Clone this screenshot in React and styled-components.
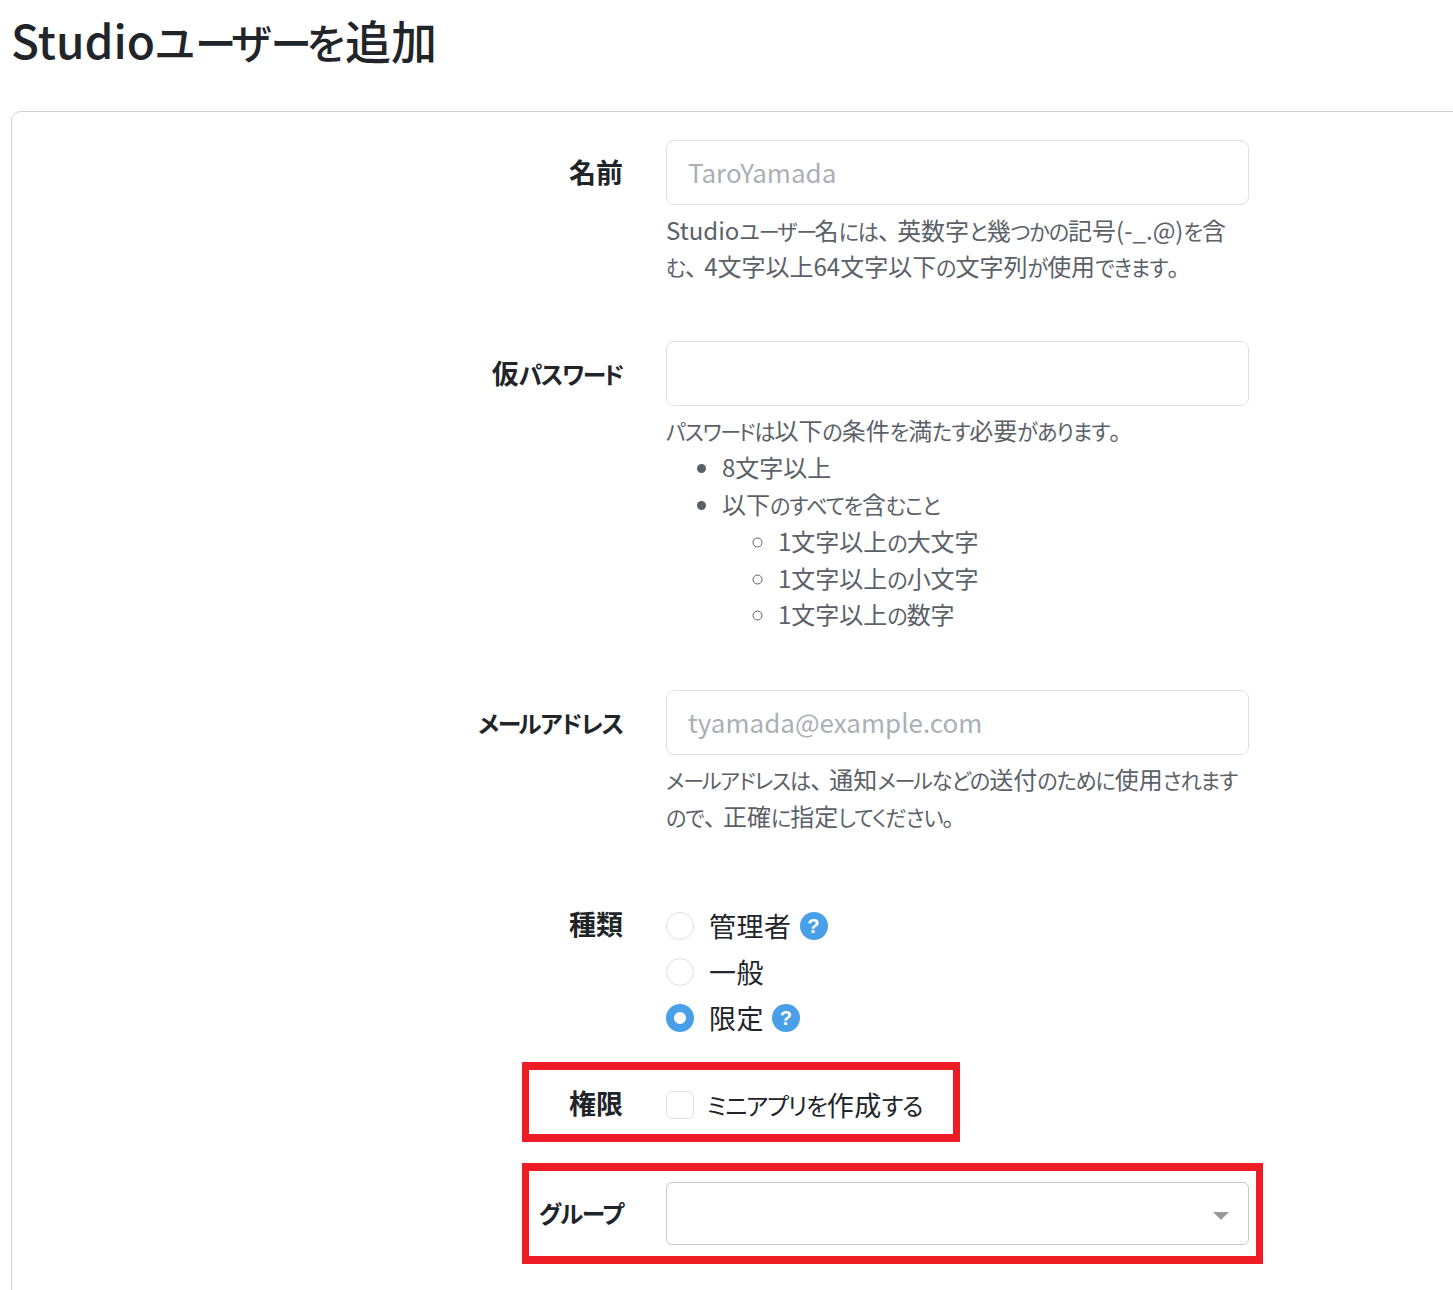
import React from "react";
import styled, { createGlobalStyle } from "styled-components";

const Global = createGlobalStyle`
  html, body { margin: 0; padding: 0; background: #fff; overflow: hidden; }
  body { font-family: "Noto Sans CJK JP", "Open Sans", sans-serif; color: #212529; font-feature-settings: "palt"; }
`;
const KanaRun = styled.span`
  font-size: 0.88em; line-height: 1; letter-spacing: -0.05em;
`;
const BarRun = styled(KanaRun)`
  letter-spacing: -0.12em;
`;
const Punct = styled.span`
  font-feature-settings: normal; line-height: 1; letter-spacing: -0.3em; margin-right: 0.1em;
`;
const Page = styled.div`
  width: 1453px; height: 1290px; overflow: hidden; padding: 9px 0 0 11px; box-sizing: border-box;
`;
const Title = styled.h1`
  margin: 0 0 41px; font-size: 46px; line-height: 61px; font-weight: 500; color: #212529;
  ${KanaRun} { font-size: 0.9em; letter-spacing: 0; }
  ${BarRun} { letter-spacing: -0.12em; }
`;
const Card = styled.section`
  width: 1600px; height: 1300px; box-sizing: border-box; border: 1px solid #d3d3d3; border-radius: 10px; padding-top: 28px;
`;
const Row = styled.div`
  position: relative; display: grid; grid-template-columns: 611px 583px; column-gap: 43px; margin-bottom: ${p => p.$mb || 0}px;
`;
const Label = styled.label`
  text-align: right; font-size: 27px; font-weight: 700; line-height: ${p => p.$lh || 63}px; color: #212529;
`;
const Input = styled.div`
  height: 65px; box-sizing: border-box; border: 1px solid #dfe1e6; border-radius: 8px; padding: 0 21px;
  font-size: 26px; line-height: 61px; color: #a9b0b6;
`;
const Help = styled.div`
  margin-top: 6.5px; font-size: 24px; line-height: 36.8px; color: #5b6168;
`;
const List = styled.ul`
  margin: 0; padding-left: ${p => p.$pl}px; list-style-type: ${p => p.$type};
`;
const Options = styled.div`
  display: flex; flex-direction: column; gap: 18px; padding-top: 8px;
`;
const Option = styled.div`
  display: flex; align-items: center; height: 28px; font-size: 27px; color: #212529; letter-spacing: 0.5px;
`;
const Radio = styled.span`
  width: 28px; height: 28px; box-sizing: border-box; border-radius: 50%; margin-right: 15px; flex: none;
  border: ${p => (p.$on ? "8px solid #4aa0e8" : "1px solid #dfe1e6")}; background: #fff;
`;
const Check = styled.span`
  width: 28px; height: 28px; box-sizing: border-box; border-radius: 6px; margin-right: 13px; flex: none; border: 1px solid #dfe1e6;
`;
const HintIcon = styled.span`
  width: 28px; height: 28px; margin-left: 8px; border-radius: 50%; background: #4aa0e8; color: #fff; flex: none;
  display: flex; align-items: center; justify-content: center; font: 700 20px/28px "Liberation Sans", sans-serif;
`;
const Select = styled.div`
  position: relative; height: 63px; box-sizing: border-box; border: 1px solid #c9c9c9; border-radius: 6px;
`;
const Caret = styled.span`
  position: absolute; right: 19px; top: 29px; border-style: solid; border-width: 8px 8px 0; border-color: #999 transparent transparent;
`;
const Mark = styled.div`
  position: absolute; left: 510px; top: ${p => p.$top}px; width: ${p => p.$w}px; height: ${p => p.$h}px;
  box-sizing: border-box; border: solid #ee1c25; border-width: 8px 7px 8px 7px; pointer-events: none;
`;

const JpText = ({ children }) =>
  children.split(/(ー+|[、。]+|[\u3040-\u30fb\u30fd-\u30ff]+)/).map((part, i) => {
    if (i % 2 === 0) return part;
    if (/[、。]/.test(part)) return <Punct key={i}>{part}</Punct>;
    if (part[0] === "ー") return <BarRun key={i}>{part}</BarRun>;
    return <KanaRun key={i}>{part}</KanaRun>;
  });

export default function App() {
  return (
    <Page>
      <Global />
      <Title><JpText>Studioユーザーを追加</JpText></Title>
      <Card>
        <Row $mb={55.9}>
          <Label>名前</Label>
          <div>
            <Input>TaroYamada</Input>
            <Help><JpText>Studioユーザー名には、英数字と幾つかの記号(-_.@)を含む、4文字以上64文字以下の文字列が使用できます。</JpText></Help>
          </div>
        </Row>
        <Row $mb={56.7}>
          <Label><JpText>仮パスワード</JpText></Label>
          <div>
            <Input />
            <Help>
              <JpText>パスワードは以下の条件を満たす必要があります。</JpText>
              <List $pl={56} $type="disc">
                <li>8<JpText>文字以上</JpText></li>
                <li><JpText>以下のすべてを含むこと</JpText>
                  <List $pl={56} $type="circle">
                    <li><JpText>1文字以上の大文字</JpText></li>
                    <li><JpText>1文字以上の小文字</JpText></li>
                    <li><JpText>1文字以上の数字</JpText></li>
                  </List>
                </li>
              </List>
            </Help>
          </div>
        </Row>
        <Row $mb={68.9}>
          <Label><JpText>メールアドレス</JpText></Label>
          <div>
            <Input>tyamada@example.com</Input>
            <Help><JpText>メールアドレスは、通知メールなどの送付のために使用されますので、正確に指定してください。</JpText></Help>
          </div>
        </Row>
        <Row $mb={59}>
          <Label $lh={40}>種類</Label>
          <Options>
            <Option><Radio />管理者<HintIcon>?</HintIcon></Option>
            <Option><Radio />一般</Option>
            <Option><Radio $on />限定<HintIcon>?</HintIcon></Option>
          </Options>
        </Row>
        <Row $mb={63}>
          <Mark $top={-29} $w={438} $h={80} />
          <Label $lh={24}>権限</Label>
          <Option><Check /><JpText>ミニアプリを作成する</JpText></Option>
        </Row>
        <Row>
          <Mark $top={-19} $w={741} $h={101} />
          <Label $lh={60}><JpText>グループ</JpText></Label>
          <Select><Caret /></Select>
        </Row>
      </Card>
    </Page>
  );
}
